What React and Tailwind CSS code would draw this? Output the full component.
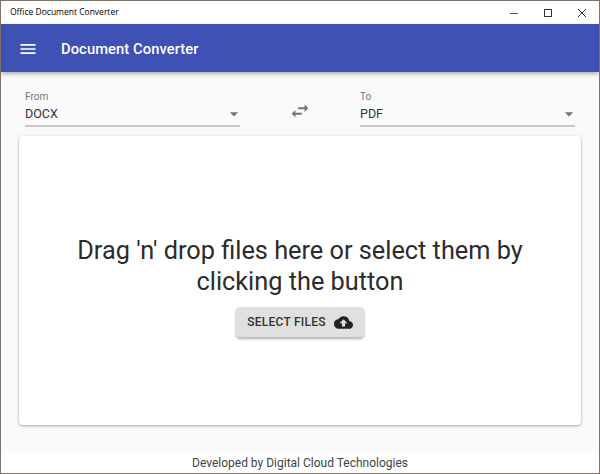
import React from 'react';
import { MdMenu, MdSwapHoriz, MdCloudUpload, MdArrowDropDown } from 'react-icons/md';

const Picker = ({ label, value }) => (
  <div className="flex-1 h-[54px] flex flex-col justify-end">
    <span className="text-[10px] leading-3 text-[#757575]">{label}</span>
    <div className="flex items-center justify-between h-[24px] border-b-2 border-[#c8c8c8] text-[#333] text-[12.5px]">
      <span>{value}</span>
      <MdArrowDropDown className="text-[20px] text-[#757575] -mr-[4px]" />
    </div>
  </div>
);

const App = () => {
  return (
    <div className="w-[600px] h-[474px] flex flex-col border border-[#7f7268] bg-[#fafafa] font-['Roboto',sans-serif] overflow-hidden">
      <div className="h-[23px] shrink-0 bg-white flex items-center justify-between pl-[9px] font-['Open_Sans',sans-serif] text-[8.5px] text-black">
        <span>Office Document Converter</span>
        <div className="flex items-center gap-[24px] pr-[12px]">
          <svg width="10" height="10" viewBox="0 0 10 10"><path d="M1 5.5h8" stroke="#555" fill="none" /></svg>
          <svg width="10" height="10" viewBox="0 0 10 10"><rect x="1.5" y="1.5" width="7" height="7" stroke="#333" fill="none" /></svg>
          <svg width="10" height="10" viewBox="0 0 10 10"><path d="M1 1l8 8M9 1l-8 8" stroke="#333" fill="none" /></svg>
        </div>
      </div>

      <header className="h-[48px] shrink-0 bg-[#3f51b5] flex items-center pl-[17px] pt-[2px] text-white shadow-[0_2px_4px_rgba(0,0,0,0.3)] z-10">
        <MdMenu className="text-[20px]" />
        <h1 className="ml-[23px] text-[14.7px] font-medium tracking-[0.1px]">Document Converter</h1>
      </header>

      <main className="flex-1 flex flex-col px-[18px] pb-[27px]">
        <div className="flex items-end px-[6px] pb-[9px] h-[64px] shrink-0">
          <Picker label="From" value="DOCX" />
          <div className="w-[120px] flex justify-center pb-[3px]">
            <MdSwapHoriz className="text-[22px] text-[#757575] mb-[2px]" />
          </div>
          <Picker label="To" value="PDF" />
        </div>
        <section className="flex-1 bg-white rounded-[4px] shadow-[0_1px_3px_rgba(0,0,0,0.35)] flex flex-col items-center pt-[99px]">
          <p className="text-[25.3px] leading-[31px] text-center text-[#2b2b2b] w-[480px]">
            Drag 'n' drop files here or select them by clicking the button
          </p>
          <button className="mt-[10px] h-[30px] w-[128px] rounded-[4px] bg-[#e0e0e0] flex items-center justify-center gap-[8px] text-[12px] font-medium tracking-[0.25px] text-[#333] shadow-[0_2px_3px_rgba(0,0,0,0.3)]">
            SELECT FILES
            <MdCloudUpload className="text-[19px] text-[#222]" />
          </button>
        </section>
      </main>

      <footer className="h-[21px] shrink-0 bg-white flex items-center justify-center text-[12px] text-[#444]">
        Developed by Digital Cloud Technologies
      </footer>
    </div>
  );
};

export default App;
